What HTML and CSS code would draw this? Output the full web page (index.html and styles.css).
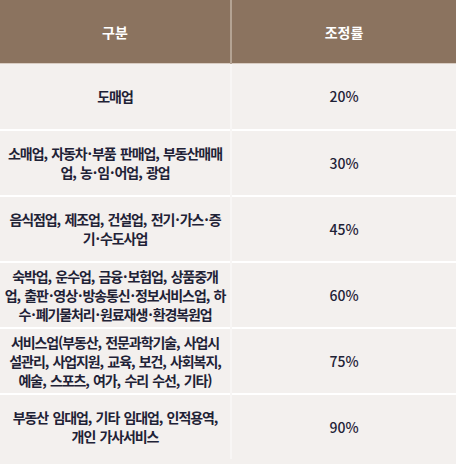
FILE: index.html
```html
<!DOCTYPE html>
<html lang="ko">
<head>
<meta charset="utf-8">
<link rel="stylesheet" href="styles.css">
</head>
<body>
<table class="rate-table">
  <thead>
    <tr>
      <th class="col-type">구분</th>
      <th class="col-rate">조정률</th>
    </tr>
  </thead>
  <tbody>
    <tr>
      <td class="type">도매업</td>
      <td class="rate">20%</td>
    </tr>
    <tr>
      <td class="type">소매업, 자동차<span class="dot">·</span>부품 판매업, 부동산매매<br>업, 농<span class="dot">·</span>임<span class="dot">·</span>어업, 광업</td>
      <td class="rate">30%</td>
    </tr>
    <tr>
      <td class="type">음식점업, 제조업, 건설업, 전기<span class="dot">·</span>가스<span class="dot">·</span>증<br>기<span class="dot">·</span>수도사업</td>
      <td class="rate">45%</td>
    </tr>
    <tr>
      <td class="type">숙박업, 운수업, 금융<span class="dot">·</span>보험업, 상품중개<br>업, 출판<span class="dot">·</span>영상<span class="dot">·</span>방송통신<span class="dot">·</span>정보서비스업, 하<br>수<span class="dot">·</span>폐기물처리<span class="dot">·</span>원료재생<span class="dot">·</span>환경복원업</td>
      <td class="rate">60%</td>
    </tr>
    <tr>
      <td class="type">서비스업(부동산, 전문과학기술, 사업시<br>설관리, 사업지원, 교육, 보건, 사회복지,<br>예술, 스포츠, 여가, 수리 수선, 기타)</td>
      <td class="rate">75%</td>
    </tr>
    <tr>
      <td class="type">부동산 임대업, 기타 임대업, 인적용역,<br>개인 가사서비스</td>
      <td class="rate">90%</td>
    </tr>
  </tbody>
</table>
</body>
</html>
```
FILE: styles.css
```css
html, body {
  margin: 0;
  padding: 0;
  background: #f3f0ee;
}
body {
  font-family: "Noto Sans CJK KR", "Noto Sans", sans-serif;
  color: #1f2236;
}
.rate-table {
  width: 456px;
  border-collapse: collapse;
  table-layout: fixed;
}
.rate-table th {
  background: #8b735f;
  color: #ffffff;
  font-size: 14px;
  font-weight: 700;
  height: 63px;
  padding: 0;
  border-bottom: 1px solid #d8ccc2;
}
.rate-table th.col-type {
  width: 230px;
  border-right: 2px solid #b4a393;
}
.rate-table td {
  background: #f3f0ee;
  text-align: center;
  vertical-align: middle;
  font-size: 14px;
  font-weight: 700;
  line-height: 19px;
  height: 64px;
  padding: 0;
  border-top: 2px solid #ffffff;
}
.rate-table td.type {
  letter-spacing: -1.1px;
  word-spacing: 1.5px;
  white-space: nowrap;
  border-right: 2px solid #f8f6f5;
}
.rate-table td.type .dot {
  margin: 0 1px;
}
.rate-table td.rate {
  font-weight: 500;
}
.rate-table tbody tr:first-child td {
  border-top: 0;
  height: 65px;
}
```
